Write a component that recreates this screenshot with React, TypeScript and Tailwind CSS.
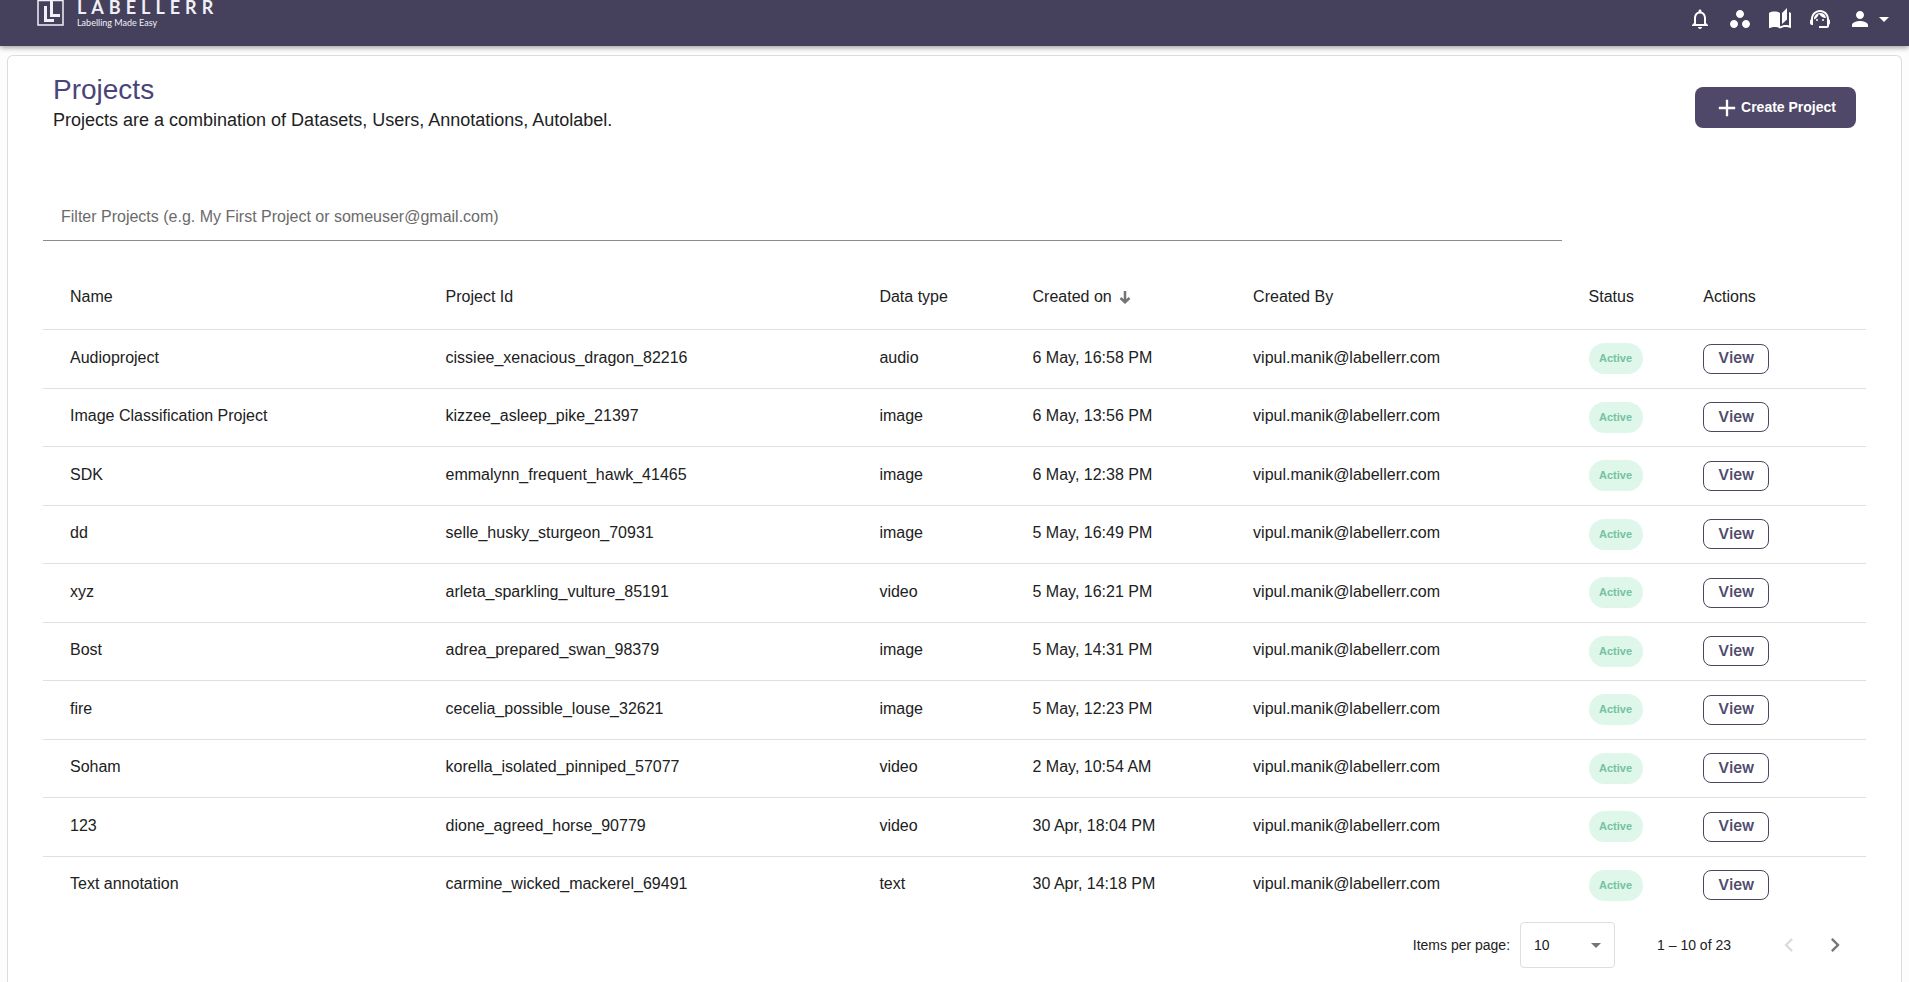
import React, { useState } from 'react';
import {
    MdNotificationsNone, MdWorkspaces, MdAutoStories, MdSupportAgent, MdPerson,
    MdArrowDropDown, MdAdd, MdChevronLeft, MdChevronRight,
} from 'react-icons/md';

interface Project {
    name: string;
    id: string;
    dataType: string;
    createdOn: string;
}

const CREATED_BY = 'vipul.manik@labellerr.com';

const projects: Project[] = [
    { name: 'Audioproject', id: 'cissiee_xenacious_dragon_82216', dataType: 'audio', createdOn: '6 May, 16:58 PM' },
    { name: 'Image Classification Project', id: 'kizzee_asleep_pike_21397', dataType: 'image', createdOn: '6 May, 13:56 PM' },
    { name: 'SDK', id: 'emmalynn_frequent_hawk_41465', dataType: 'image', createdOn: '6 May, 12:38 PM' },
    { name: 'dd', id: 'selle_husky_sturgeon_70931', dataType: 'image', createdOn: '5 May, 16:49 PM' },
    { name: 'xyz', id: 'arleta_sparkling_vulture_85191', dataType: 'video', createdOn: '5 May, 16:21 PM' },
    { name: 'Bost', id: 'adrea_prepared_swan_98379', dataType: 'image', createdOn: '5 May, 14:31 PM' },
    { name: 'fire', id: 'cecelia_possible_louse_32621', dataType: 'image', createdOn: '5 May, 12:23 PM' },
    { name: 'Soham', id: 'korella_isolated_pinniped_57077', dataType: 'video', createdOn: '2 May, 10:54 AM' },
    { name: '123', id: 'dione_agreed_horse_90779', dataType: 'video', createdOn: '30 Apr, 18:04 PM' },
    { name: 'Text annotation', id: 'carmine_wicked_mackerel_69491', dataType: 'text', createdOn: '30 Apr, 14:18 PM' },
];

const Logo: React.FC = () => (
    <a href="#" className="flex items-start gap-3 text-[#f1f0f6]">
        <svg width="29" height="28" viewBox="0 0 29 28" fill="none" stroke="currentColor">
            <rect x="2" y="0.5" width="25" height="24.5" strokeWidth="1.5" />
            <path d="M9.5 6v14.5H18" strokeWidth="3" />
            <path d="M15.5 1v14.5H24" strokeWidth="3" />
        </svg>
        <span className="flex flex-col gap-[3px]">
            <span className="font-['Lato'] text-[18px] leading-[14px] font-bold tracking-[5px]">LABELLERR</span>
            <span className="font-['Lato'] text-[9px] leading-3">Labelling Made Easy</span>
        </span>
    </a>
);

const TopBar: React.FC = () => (
    <header className="relative flex h-[46px] items-start justify-between bg-[#45415d] pl-9 pr-[13px] shadow-[0_2px_5px_rgba(0,0,0,0.35)]">
        <Logo />
        <nav className="flex items-center gap-4 pt-[7px] text-white">
            <button type="button" aria-label="Notifications"><MdNotificationsNone size={24} /></button>
            <button type="button" aria-label="Workspaces"><MdWorkspaces size={24} /></button>
            <button type="button" aria-label="Documentation"><MdAutoStories size={24} /></button>
            <button type="button" aria-label="Support"><MdSupportAgent size={24} /></button>
            <button type="button" aria-label="Account" className="flex items-center">
                <MdPerson size={24} />
                <MdArrowDropDown size={24} />
            </button>
        </nav>
    </header>
);

const App: React.FC = () => {
    const [filter, setFilter] = useState('');
    const [pageSize, setPageSize] = useState('10');

    const visible = projects.filter((p) =>
        `${p.name} ${p.id} ${CREATED_BY}`.toLowerCase().includes(filter.toLowerCase())
    );

    return (
        <div className="flex min-h-screen flex-col bg-[#fdfdfd] font-['Liberation_Sans',Arial,sans-serif] text-[#212121]">
            <TopBar />

            <main className="mx-[7px] mt-[9px] grow rounded-t-md border border-b-0 border-[#dcdcdc] bg-white px-[35px]">
                <div className="flex items-start justify-between px-[10px] pt-4">
                    <div>
                        <h1 className="text-[28px] leading-9 text-[#49457a]">Projects</h1>
                        <p className="text-[18px] leading-6">
                            Projects are a combination of Datasets, Users, Annotations, Autolabel.
                        </p>
                    </div>
                    <button
                        type="button"
                        className="mt-[15px] flex h-[41px] items-center rounded-lg bg-[#4f4868] pl-[18px] pr-5 text-[14px] font-bold text-white"
                    >
                        <MdAdd size={28} />
                        Create Project
                    </button>
                </div>

                <input
                    type="text"
                    aria-label="Filter projects"
                    value={filter}
                    onChange={(e) => setFilter(e.target.value)}
                    placeholder="Filter Projects (e.g. My First Project or someuser@gmail.com)"
                    className="mt-[62px] block h-[47px] w-5/6 border-b border-[#8c8c8c] px-[18px] text-[16px] placeholder:text-[#6b6b6b] focus:outline-none"
                />

                <table className="mt-6 w-full table-fixed text-left text-[16px]">
                    <colgroup>
                        <col className="w-[20.6%]" />
                        <col className="w-[23.8%]" />
                        <col className="w-[8.4%]" />
                        <col className="w-[12.1%]" />
                        <col className="w-[18.4%]" />
                        <col className="w-[6.3%]" />
                        <col className="w-[10.4%]" />
                    </colgroup>
                    <thead>
                        <tr className="h-16 border-b border-[#e0e0e0] [&>th]:pl-[27px] [&>th]:font-normal">
                            <th>Name</th>
                            <th>Project Id</th>
                            <th>Data type</th>
                            <th>
                                <button type="button" className="flex items-center gap-[7px]">
                                    Created on
                                    <svg width="12" height="14" viewBox="0 0 12 14" fill="none" stroke="#757575" strokeWidth="2.5">
                                        <path d="M6 1v11M1.5 8L6 12.2 10.5 8" />
                                    </svg>
                                </button>
                            </th>
                            <th>Created By</th>
                            <th>Status</th>
                            <th>Actions</th>
                        </tr>
                    </thead>
                    <tbody>
                        {visible.map((project) => (
                            <tr
                                key={project.id}
                                className="border-b border-[#e0e0e0] last:border-b-0 odd:h-[59px] even:h-[58px] [&>td]:pb-[2px] [&>td]:pl-[27px] [&>td:nth-child(n+6)]:pb-0"
                            >
                                <td>{project.name}</td>
                                <td>{project.id}</td>
                                <td>{project.dataType}</td>
                                <td>{project.createdOn}</td>
                                <td>{CREATED_BY}</td>
                                <td>
                                    <span className="flex h-[31px] w-[54px] items-center justify-center rounded-full bg-[#dff6ea] text-[11px] font-bold text-[#73c3a0]">
                                        Active
                                    </span>
                                </td>
                                <td>
                                    <button
                                        type="button"
                                        className="flex h-[30px] w-[66px] items-center justify-center rounded-lg border border-[#4a4560] font-['Inter'] text-[15px] font-semibold text-[#4f4b6b]"
                                    >
                                        View
                                    </button>
                                </td>
                            </tr>
                        ))}
                    </tbody>
                </table>

                {/* Paginator */}
                <div className="flex items-center justify-end pb-3 pr-[13px] pt-2 text-[14px]">
                    <label htmlFor="page-size" className="mr-[10px]">Items per page:</label>
                    <div className="relative">
                        <select
                            id="page-size"
                            value={pageSize}
                            onChange={(e) => setPageSize(e.target.value)}
                            className="h-[46px] w-[95px] appearance-none rounded border border-[#dedede] bg-white pl-[13px]"
                        >
                            <option>10</option>
                            <option>25</option>
                            <option>50</option>
                        </select>
                        <MdArrowDropDown size={24} className="pointer-events-none absolute right-[7px] top-[11px] text-[#757575]" />
                    </div>
                    <span className="ml-[42px] mr-11">1 – 10 of 23</span>
                    <button type="button" disabled aria-label="Previous page" className="mr-[18px] text-[#dcdcdc]">
                        <MdChevronLeft size={28} />
                    </button>
                    <button type="button" aria-label="Next page" className="mr-1 text-[#757575]">
                        <MdChevronRight size={28} />
                    </button>
                </div>
            </main>
        </div>
    );
};

export default App;
